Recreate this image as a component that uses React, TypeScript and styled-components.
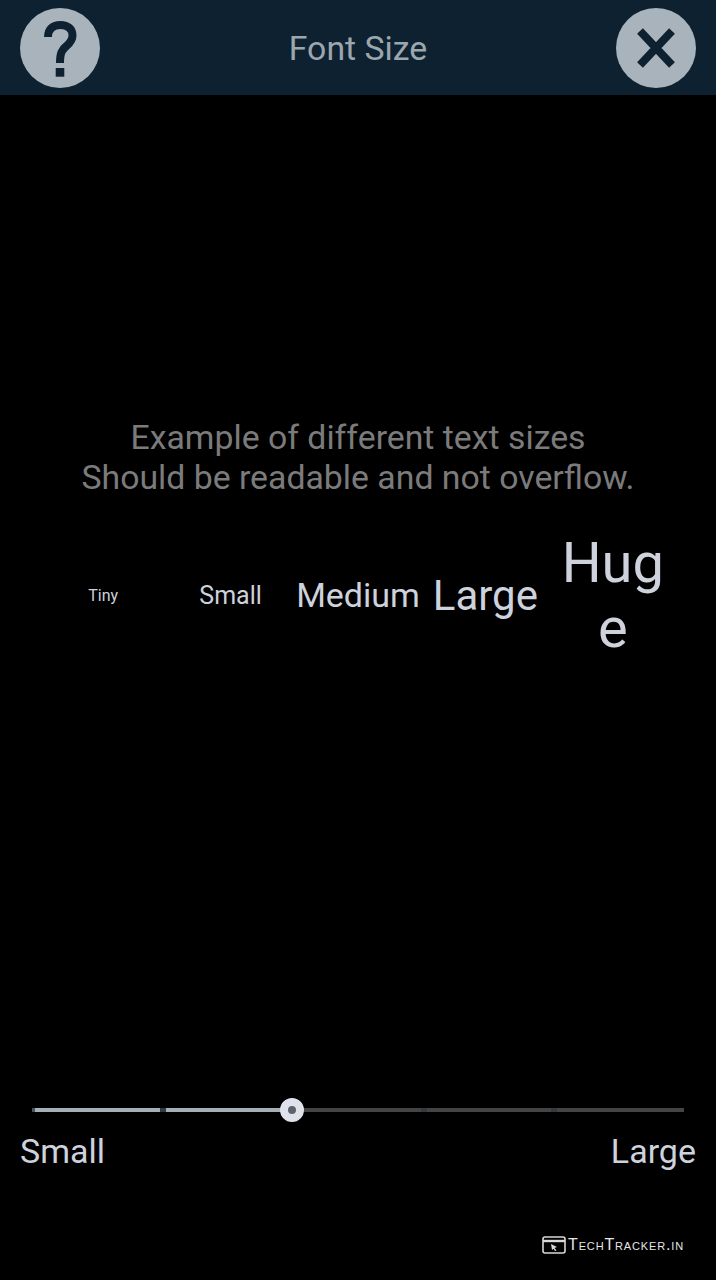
import styled, { createGlobalStyle } from "styled-components";

const GlobalStyle = createGlobalStyle`
  html, body {
    margin: 0;
    padding: 0;
    background: #000;
  }
`;

const samples = [
  { label: "Tiny", size: 16 },
  { label: "Small", size: 25 },
  { label: "Medium", size: 34 },
  { label: "Large", size: 42 },
  { label: "Huge", size: 56 },
];

const segments = [
  { width: 128, fill: 100 },
  { width: 255, fill: 50 },
  { width: 124, fill: 0 },
  { width: 127, fill: 0 },
];

export default function App(): JSX.Element {
  return (
    <Page>
      <GlobalStyle />
      <Header>
        <RoundButton aria-label="Help">
          <svg width="40" height="60" viewBox="0 0 40 60">
            <path
              d="M8 19 C8 11 13 7 20.5 7 C28 7 32.5 11 32.5 17.5 C32.5 22 30 25 26.5 28 C22 31.5 20 35 20 45"
              fill="none"
              stroke="#0d2130"
              strokeWidth="8"
            />
            <rect x="15.7" y="50" width="8.6" height="8.7" fill="#0d2130" />
          </svg>
        </RoundButton>
        <Title>Font Size</Title>
        <RoundButton aria-label="Close">
          <svg width="44" height="44" viewBox="0 0 44 44">
            <path d="M6 5 L38 39 M38 5 L6 39" fill="none" stroke="#0d2130" strokeWidth="8" />
          </svg>
        </RoundButton>
      </Header>
      <Preview>
        <Description>
          Example of different text sizes
          <br />
          Should be readable and not overflow.
        </Description>
        <SampleRow>
          {samples.map((s) => (
            <Sample key={s.label} $size={s.size}>
              {s.label}
            </Sample>
          ))}
        </SampleRow>
      </Preview>
      <SliderArea>
        <Track>
          {segments.map((s, i) => (
            <Segment key={i} $width={s.width} $fill={s.fill} />
          ))}
          <Thumb />
        </Track>
        <SliderLabels>
          <SliderLabel>Small</SliderLabel>
          <SliderLabel>Large</SliderLabel>
        </SliderLabels>
      </SliderArea>
      <Footer>
        <svg width="24" height="18" viewBox="0 0 24 18">
          <rect x="1" y="1" width="22" height="16" rx="2" fill="none" stroke="#d8d8d8" strokeWidth="1.6" />
          <path d="M1 5 H23" stroke="#d8d8d8" strokeWidth="2.4" />
          <path d="M9 8 L15 11 L12.5 12 L14.5 14.5 L13 15 L11.5 12.8 L10 14 Z" fill="#d8d8d8" />
        </svg>
        <Watermark>TechTracker.in</Watermark>
      </Footer>
    </Page>
  );
}

const Page = styled.div`
  width: 716px;
  height: 1280px;
  background: #000;
  display: flex;
  flex-direction: column;
  font-family: Roboto, "Liberation Sans", sans-serif;
  overflow: hidden;
`;

const Header = styled.header`
  height: 95px;
  flex: none;
  background: #0d2130;
  display: flex;
  align-items: center;
  justify-content: space-between;
  padding: 0 20px;
  box-sizing: border-box;
`;

const RoundButton = styled.button`
  width: 80px;
  height: 80px;
  border: none;
  border-radius: 50%;
  background: #a9b3bc;
  padding: 0;
  display: flex;
  align-items: center;
  justify-content: center;
`;

const Title = styled.h1`
  margin: 0;
  padding-top: 2px;
  font-size: 33.8px;
  font-weight: 400;
  color: #9ca6af;
`;

const Preview = styled.main`
  height: 1025px;
  flex: none;
  box-sizing: border-box;
  padding-top: 323px;
  display: flex;
  flex-direction: column;
  align-items: center;
`;

const Description = styled.p`
  margin: 0;
  font-size: 33.8px;
  line-height: 40px;
  color: #7b7b7b;
  text-align: center;
`;

const SampleRow = styled.div`
  margin-top: 33px;
  width: 637px;
  display: grid;
  grid-template-columns: repeat(5, 1fr);
  align-items: center;
`;

const Sample = styled.span<{ $size: number }>`
  font-size: ${(p) => p.$size}px;
  line-height: 1.16;
  color: #cdd2dc;
  text-align: center;
  overflow-wrap: anywhere;
`;

const SliderArea = styled.section`
  flex: 1;
  display: flex;
  flex-direction: column;
`;

const Track = styled.div`
  position: relative;
  margin: -12px 32px 0;
  height: 4px;
  display: flex;
  gap: 6px;
  background: #333a40;

  &::before {
    content: "";
    position: absolute;
    left: 0;
    top: 0;
    width: 3px;
    height: 4px;
    background: #4a525a;
  }
`;

const Segment = styled.div<{ $width: number; $fill: number }>`
  width: ${(p) => p.$width}px;
  height: 4px;
  background: linear-gradient(
    to right,
    #a6aeb8 ${(p) => p.$fill}%,
    #444444 ${(p) => p.$fill}%
  );
`;

const Thumb = styled.div`
  position: absolute;
  left: 248px;
  top: -10px;
  width: 24px;
  height: 24px;
  box-sizing: border-box;
  border-radius: 50%;
  background: #5d636b;
  border: 8px solid #dfe2ea;
`;

const SliderLabels = styled.div`
  margin-top: 18px;
  padding: 0 20px;
  display: flex;
  justify-content: space-between;
`;

const SliderLabel = styled.span`
  font-size: 34px;
  line-height: 42px;
  color: #cdd2dc;
`;

const Footer = styled.footer`
  display: flex;
  align-items: center;
  justify-content: flex-end;
  gap: 2px;
  padding: 0 32px 26px 0;
`;

const Watermark = styled.span`
  font-family: "Liberation Sans", Arial, sans-serif;
  font-variant: small-caps;
  font-size: 16px;
  letter-spacing: 0.85px;
  color: #e6e6e6;
`;
